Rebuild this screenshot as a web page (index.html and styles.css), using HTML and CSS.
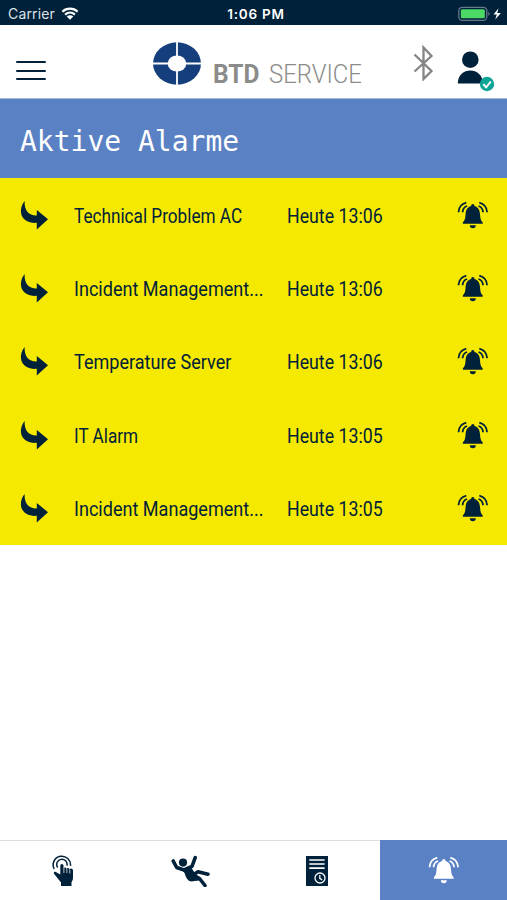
FILE: index.html
```html
<!DOCTYPE html>
<html lang="de">
<head>
  <meta charset="utf-8">
  <title>BTD Service - Aktive Alarme</title>
  <link rel="stylesheet" href="styles.css">
</head>
<body>
  <svg class="icon-defs">
    <symbol id="arrow" viewBox="0 0 28 30">
      <path d="M4.6 1C1.5 4.500 .3 9.500 1.200 14C2.800 20 9 23.500 16.800 22.800V29.500L28 19.200L16.800 10V15.400C9.500 15.800 4.200 11.500 4.600 1Z"/>
    </symbol>
    <symbol id="bell" viewBox="0 0 32 28">
      <path d="M14.100 4.900a1.700 1.800 0 0 1 3.400 0C21.400 6 22.700 9 23 13C23.300 17.500 23.800 19.500 25.700 21.300V22.800H5.900V21.300C7.800 19.500 8.300 17.500 8.600 13C8.900 9 10.200 6 14.100 4.900ZM12.800 24.200H18.800A3 3 0 0 1 12.800 24.200Z"/>
      <path class="wave" d="M1.500 11.300C1.700 6.500 4.600 2.800 9.300 1.600M5.600 11.300C5.700 8.300 7.200 6 10.100 5M30.100 11.300C29.900 6.500 27 2.800 22.300 1.600M26 11.300C25.900 8.300 24.400 6 21.500 5"/>
    </symbol>
  </svg>

  <div class="app">
    <div class="status-bar">
      <div class="carrier">
        <span>Carrier</span>
        <svg width="18" height="14" viewBox="0 0 18 14">
          <path class="wifi" d="M1.400 4.700C5.700 .7 12.300 .7 16.600 4.700M4.100 7.600C7 5 11 5 13.900 7.600"/>
          <path d="M5.700 9.400C7.600 7.800 10.400 7.800 12.300 9.400L9 12.800Z"/>
        </svg>
      </div>
      <div class="clock">1:06 PM</div>
      <div class="battery">
        <svg width="44" height="16" viewBox="0 0 44 16">
          <rect class="battery-frame" x=".8" y="1.300" width="28" height="13" rx="3.500"/>
          <rect class="battery-level" x="2.800" y="3.300" width="24" height="9" rx="1.500"/>
          <path class="battery-cap" d="M30.300 5.500Q33.200 7.800 30.300 10.100Z"/>
          <path d="M40.500 2.200L35.500 8.400H38.800L37.200 13.600L42.900 6.900H39.200Z"/>
        </svg>
      </div>
    </div>

    <header>
      <div class="menu-btn"><i></i><i></i><i></i></div>
      <div class="logo">
        <svg width="48" height="44" viewBox="0 0 48 44">
          <ellipse class="logo-ring" cx="24" cy="21.500" rx="24" ry="21.200"/>
          <path class="logo-cut" d="M24 0V44M0 21.500H48"/>
          <ellipse class="logo-hole" cx="24" cy="21.500" rx="9.300" ry="8"/>
        </svg>
        <span class="logo-bold">BTD</span>
        <span class="logo-light">SERVICE</span>
      </div>
      <svg class="bluetooth" width="21" height="36" viewBox="0 0 21 36">
        <path d="M1.500 9.500L18.500 26L10.500 34V2.500L18.500 11L1.500 26.500"/>
      </svg>
      <svg class="user" width="38" height="42" viewBox="0 0 38 42">
        <circle cx="13.300" cy="9.700" r="8.300"/>
        <path d="M.8 33.500C.8 16.200 25.800 16.200 25.800 33.500Z"/>
        <circle class="badge" cx="30" cy="34" r="7.200"/>
        <path class="check" d="M26.300 34.200L29.200 37.300L33.800 31.500"/>
      </svg>
    </header>

    <h1><span>Aktive Alarme</span></h1>

    <div class="alarm-list">
      <div class="alarm">
        <svg class="arrow"><use href="#arrow"/></svg>
        <div class="name narrow"><span>Technical Problem AC</span></div>
        <div class="time"><span>Heute 13:06</span></div>
        <svg class="bell"><use href="#bell"/></svg>
      </div>
      <div class="alarm">
        <svg class="arrow"><use href="#arrow"/></svg>
        <div class="name"><span>Incident Management...</span></div>
        <div class="time"><span>Heute 13:06</span></div>
        <svg class="bell"><use href="#bell"/></svg>
      </div>
      <div class="alarm">
        <svg class="arrow"><use href="#arrow"/></svg>
        <div class="name"><span>Temperature Server</span></div>
        <div class="time"><span>Heute 13:06</span></div>
        <svg class="bell"><use href="#bell"/></svg>
      </div>
      <div class="alarm">
        <svg class="arrow"><use href="#arrow"/></svg>
        <div class="name narrow"><span>IT Alarm</span></div>
        <div class="time"><span>Heute 13:05</span></div>
        <svg class="bell"><use href="#bell"/></svg>
      </div>
      <div class="alarm">
        <svg class="arrow"><use href="#arrow"/></svg>
        <div class="name"><span>Incident Management...</span></div>
        <div class="time"><span>Heute 13:05</span></div>
        <svg class="bell"><use href="#bell"/></svg>
      </div>
    </div>

    <nav>
      <div class="tab">
        <svg width="22" height="32" viewBox="0 0 22 32">
          <path class="touch" d="M2.200 14A8.700 8.700 0 1 1 18.500 10.800M5.700 12.500A5.200 5.200 0 1 1 15 10.600"/>
          <path d="M8.300 10.500a1.600 1.600 0 0 1 3.200 0V14a1.400 1.400 0 0 1 2.900-.1V14.600a1.400 1.400 0 0 1 2.900-.1V15.400a1.500 1.500 0 0 1 3.700 0V22C21 24.500 20.500 25.500 19.500 27V31H9V27.500L1.800 18.400C1.700 16.700 3.500 16.500 4.700 17.400L8.300 19.500Z"/>
          <path class="fingers" d="M11.900 13V18M14.900 14V18M17.800 15V18.500"/>
        </svg>
      </div>
      <div class="tab">
        <svg width="39" height="32" viewBox="0 0 39 32">
          <circle cx="12" cy="7.600" r="4.100"/>
          <path class="limb" d="M2.200 6L5.700 12.500L13 15L21 11.300L24.200 2.700M22 20L27 16.800L37 19.200M19 24L28.500 23.500L34 30.500"/>
          <path d="M10.500 14L19.500 11.500L24.500 19L29 22V25L20.500 26.500C17 26.500 14.800 22.500 13.800 18.500Z"/>
        </svg>
      </div>
      <div class="tab">
        <svg width="22" height="32" viewBox="0 0 22 32">
          <path d="M0 1H22V31H0Z"/>
          <path class="lines" d="M3.300 5H18.600M3.300 9H18.600M3.300 13.200H18.600"/>
          <path class="dial" d="M19 23a5 5 0 1 1-10 0a5 5 0 1 1 10 0ZM13.800 20V23.300L16.200 25"/>
        </svg>
      </div>
      <div class="tab active">
        <svg class="bell"><use href="#bell"/></svg>
      </div>
    </nav>
  </div>
</body>
</html>
```

FILE: styles.css
```css
* {
  box-sizing: border-box;
}

body {
  margin: 0;
  font-family: Roboto, sans-serif;
  background: #fff;
  color: #00213a;
}

svg {
  display: block;
  flex: none;
  color: #00213a;
  fill: currentColor;
}

.icon-defs {
  position: absolute;
  width: 0;
  height: 0;
}

.app {
  display: flex;
  flex-direction: column;
  height: 900px;
}

.status-bar {
  display: grid;
  grid-template-columns: 1fr auto 1fr;
  align-items: center;
  height: 25px;
  padding: 2px 5px 0 8px;
  background: #00213a;
  color: #fff;
  font: 14px Inter, sans-serif;
}

.status-bar svg {
  color: #fff;
}

.carrier {
  display: flex;
  align-items: center;
  gap: 6px;
  color: #dce3e8;
  letter-spacing: 0.15px;
}

.clock {
  font-size: 13.5px;
  font-weight: 600;
  letter-spacing: 0.75px;
  padding-left: 2px;
}

.battery {
  justify-self: end;
}

.wifi {
  fill: none;
  stroke: #fff;
  stroke-width: 2.2;
}

.battery-frame {
  fill: none;
  stroke: #65798a;
  stroke-width: 1.3;
}

.battery-level {
  fill: #4cd964;
}

.battery-cap {
  fill: #65798a;
}

header {
  display: flex;
  align-items: flex-start;
  height: 73px;
  padding: 0 12px 0 16px;
}

.menu-btn {
  display: flex;
  flex-direction: column;
  gap: 6.5px;
  width: 30px;
  margin: 36px 107px 0 0;
}

.menu-btn i {
  height: 2px;
  border-radius: 1px;
  background: #00213a;
}

.logo {
  display: flex;
  width: 260px;
  padding-top: 17px;
  color: #8b8b89;
  font-size: 25px;
  line-height: 30px;
}

.logo-ring {
  fill: #143f7c;
}

.logo-cut {
  stroke: #fff;
  stroke-width: 1.8;
}

.logo-hole {
  fill: #fff;
}

.logo span {
  margin-top: 18px;
  transform-origin: left;
}

.logo-bold {
  width: 44px;
  margin-left: 12px;
  font-weight: 700;
  transform: scaleX(0.98);
}

.logo-light {
  margin-left: 12px;
  font-weight: 300;
  transform: scaleX(0.955);
}

.bluetooth {
  margin: 20px 23px 0 0;
}

.bluetooth path {
  fill: none;
  stroke: #858585;
  stroke-width: 2.3;
}

.user {
  margin-top: 25px;
}

.badge {
  fill: #0fa596;
}

.check {
  fill: none;
  stroke: #fff;
  stroke-width: 2;
}

h1 {
  display: flex;
  align-items: center;
  height: 80px;
  margin: 0;
  padding: 5px 20px 0;
  border-top: 1px solid #a3b8df;
  background: #5a81c4;
  color: #fff;
  font: 28px "DejaVu Sans Mono", monospace;
}

.alarm-list {
  background: #f5e900;
}

.alarm {
  display: flex;
  align-items: center;
  height: 73.4px;
  padding: 0 18px 0 20px;
  font-size: 19.5px;
  white-space: nowrap;
}

.alarm span {
  display: inline-block;
  transform: scaleX(0.926);
  transform-origin: left;
}

.alarm .narrow span {
  transform: scaleX(0.88);
}

.alarm .time span {
  transform: scaleX(0.91);
}

.arrow {
  width: 28px;
  height: 30px;
}

.name {
  width: 213px;
  margin-left: 26px;
}

.time {
  flex: 1;
}

.name,
.time {
  padding-top: 3px;
}

.bell {
  width: 32px;
  height: 28px;
}

.wave {
  fill: none;
  stroke: currentColor;
  stroke-width: 1.8;
}

nav {
  display: grid;
  grid-template-columns: repeat(4, 1fr);
  height: 60px;
  margin-top: auto;
  border-top: 1px solid #dedede;
}

.tab {
  display: flex;
  align-items: center;
  justify-content: center;
}

.tab.active {
  margin-top: -1px;
  background: #5a81c4;
}

.active .bell {
  color: #fff;
}

.touch {
  fill: none;
  stroke: #00213a;
  stroke-width: 1.5;
}

.fingers {
  fill: none;
  stroke: #fff;
  stroke-width: 0.7;
}

.limb {
  fill: none;
  stroke: #00213a;
  stroke-width: 3.6;
  stroke-linecap: round;
  stroke-linejoin: round;
}

.lines,
.dial {
  fill: none;
  stroke: #fff;
  stroke-width: 1.7;
}

.dial {
  stroke-width: 1.3;
}
```
